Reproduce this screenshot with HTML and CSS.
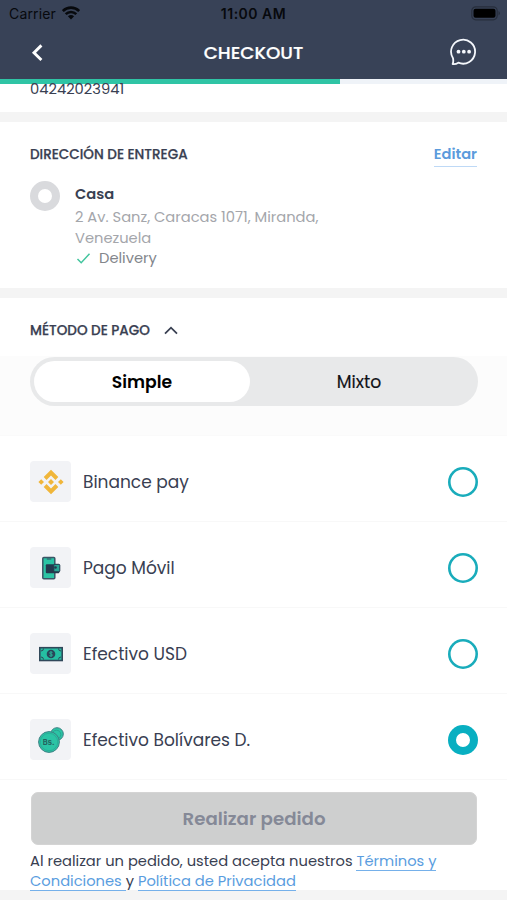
FILE: index.html
```html
<!DOCTYPE html>
<html lang="es">
<head>
<meta charset="utf-8">
<meta name="viewport" content="width=device-width, initial-scale=1">
<title>Checkout</title>
<link rel="stylesheet" href="styles.css">
</head>
<body>
<header class="topbar">
  <div class="status">
    <div class="carrier"><span>Carrier</span>
      <svg width="18" height="14" viewBox="0 0 18 14"><path d="M0.8 5.1C5.4.4 12.6.4 17.2 5.1" fill="none" stroke="#07090d" stroke-width="2.7"/><path d="M3.7 8.2C6.7 5.2 11.3 5.2 14.3 8.2" fill="none" stroke="#07090d" stroke-width="2.5"/><path d="M9 13.5 5.9 10.3Q9 7.7 12.1 10.3Z" fill="#07090d"/></svg>
    </div>
    <time class="clock">11:00 AM</time>
    <svg class="battery" width="30" height="15" viewBox="0 0 30 15"><rect x=".8" y=".8" width="25.4" height="13" rx="4" fill="none" stroke="#272e3c" stroke-width="1.2"/><rect x="2.5" y="2.8" width="22" height="9" rx="2" fill="#000"/><path d="M27.5 5v4.5q1.4-.6 1.4-2.2T27.5 5z" fill="#272e3c"/></svg>
  </div>
  <nav class="nav">
    <svg class="back" width="14" height="20" viewBox="0 0 14 20"><path d="M11.4 2.4 4 9.700 11.400 17" fill="none" stroke="#fff" stroke-width="2.900"/></svg>
    <h1 class="title">CHECKOUT</h1>
    <svg class="chat" width="28" height="28" viewBox="0 0 28 28"><path d="M3 20.200A12 12 0 1 1 8.300 24.700Q5.500 26.500 2.600 26Q3.700 23.500 3 20.200Z" fill="none" stroke="#f4f7fc" stroke-width="1.800" stroke-linejoin="round"/><g fill="#f4f7fc"><circle cx="8.500" cy="13.700" r="1.900"/><circle cx="13.800" cy="13.700" r="1.900"/><circle cx="19.100" cy="13.700" r="1.900"/></g></svg>
  </nav>
</header>
<div class="progress"><div class="progress-fill"></div></div>
<main>
  <section class="contact"><span class="phone">04242023941</span></section>
  <section class="address">
    <div class="section-head"><h2 class="heading">DIRECCIÓN DE ENTREGA</h2><a class="edit">Editar</a></div>
    <div class="place">
      <span class="place-radio"></span>
      <div class="place-info">
        <strong class="place-name">Casa</strong>
        <p class="place-text">2 Av. Sanz, Caracas 1071, Miranda,<br>Venezuela</p>
        <div class="delivery"><svg width="15" height="13" viewBox="0 0 15 13"><path d="M1.500 7 5.200 10.700 13.500 1.800" fill="none" stroke="#43c59e" stroke-width="1.500"/></svg><span>Delivery</span></div>
      </div>
    </div>
  </section>
  <section class="payment">
    <div class="payment-head"><h2 class="heading">MÉTODO DE PAGO</h2><svg width="14" height="9" viewBox="0 0 14 9"><path d="M1 7.700 7 1.700 13 7.700" fill="none" stroke="#394052" stroke-width="1.800"/></svg></div>
    <div class="switch-band"><div class="switch"><div class="tab active">Simple</div><div class="tab mixed">Mixto</div></div></div>
    <ul class="methods">
      <li class="method"><span class="icon"><svg width="26" height="26" viewBox="0 0 26 26"><g fill="#f0b63a"><path d="M13 .8 20.300 8.100 17.500 10.900 13 6.400 8.500 10.900 5.700 8.100ZM13 25.200 20.300 17.900 17.500 15.100 13 19.600 8.500 15.100 5.700 17.900ZM13 10 16 13 13 16 10 13ZM3.200 10.200 6 13 3.200 15.800.4 13ZM22.800 10.200 25.600 13 22.800 15.800 20 13Z"/></g></svg></span><span class="name">Binance pay</span><span class="radio"></span></li>
      <li class="method"><span class="icon"><svg width="26" height="26" viewBox="0 0 26 26"><rect x="4.800" y="2.500" width="12" height="21.300" rx="1" fill="#2bc4a5" stroke="#3b5566" stroke-width="1.500"/><path d="M8.800 3.500h4.500v1H8.800z" fill="#344b60"/><rect x="7.800" y="9.300" width="13.500" height="9" rx="1" fill="#24394e"/><rect x="15.800" y="9.300" width="6" height="7.500" rx="1" fill="#2aa594" stroke="#24394e"/><circle cx="17.500" cy="12.500" r="1.300" fill="#24394e"/></svg></span><span class="name">Pago Móvil</span><span class="radio"></span></li>
      <li class="method"><span class="icon"><svg width="26" height="26" viewBox="0 0 26 26"><rect x="1.800" y="6.700" width="22.400" height="12.800" fill="#25bea2" stroke="#30485a" stroke-width="1.600"/><path d="M3 10q2.500 0 2.500-2.500M23 10q-2.500 0-2.500-2.500M3 16q2.500 0 2.500 2.500M23 16q-2.500 0-2.500 2.500" fill="none" stroke="#30485a"/><circle cx="13" cy="13" r="4.300" fill="#29455a"/><path d="M14.500 11.400q-3-1.100-3 .5c0 1.500 3 .7 3 2.200 0 1.600-3 .7-3.300.4M13 10v6" fill="none" stroke="#2bc4a5" stroke-width=".7"/></svg></span><span class="name">Efectivo USD</span><span class="radio"></span></li>
      <li class="method"><span class="icon"><svg width="26" height="26" viewBox="0 0 26 26"><circle cx="19" cy="7" r="6.300" fill="#2bc4a5" stroke="#3c8184"/><circle cx="18.500" cy="7.500" r="4.300" fill="none" stroke="#279c8b" stroke-width=".8"/><circle cx="11" cy="15" r="10.400" fill="#2bc4a5" stroke="#3c8184"/><circle cx="11" cy="15" r="8.700" fill="none" stroke="#27a592" stroke-width=".7"/><text class="coin-text" x="4.800" y="17.500">Bs.</text></svg></span><span class="name">Efectivo Bolívares D.</span><span class="radio selected"></span></li>
    </ul>
  </section>
</main>
<footer class="footer">
  <button class="order">Realizar pedido</button>
  <p class="legal">Al realizar un pedido, usted acepta nuestros <a>Términos y</a><br><a>Condiciones </a>y <a>Política de Privacidad</a></p>
</footer>
</body>
</html>
```
FILE: styles.css
```css
* { box-sizing: border-box; }
body { margin: 0; height: 900px; overflow: hidden; background: #f4f4f4; font-family: Poppins, Inter, sans-serif; color: #394052; white-space: nowrap; }
h1, h2, p, ul { margin: 0; padding: 0; }
svg { display: block; flex: none; }
.topbar { height: 79px; background: #384257; }
.status { height: 28px; display: grid; grid-template-columns: 1fr auto 1fr; align-items: center; padding: 0 6px; color: #07090d; font: 14px/20px Inter, sans-serif; }
.carrier { display: flex; gap: 6px; align-items: center; letter-spacing: .15px; padding-left: 3px; height: 20px; }
.carrier svg { margin-top: -2px; }
.clock { font-weight: 600; letter-spacing: .5px; }
.battery { justify-self: end; margin-top: -2px; }
.nav { height: 49px; display: grid; grid-template-columns: 1fr auto 1fr; align-items: center; padding: 0 30px; }
.title { color: #fff; font-size: 18.3px; line-height: 24px; font-weight: 500; -webkit-text-stroke: .2px #fff; }
.chat { justify-self: end; margin-right: -1px; margin-top: -1px; }
.progress { height: 5px; background: #eff3f8; }
.progress-fill { width: 340px; height: 5px; background: #2fc4a5; }
.contact { height: 28px; background: #fff; padding-left: 30px; font-size: 14.7px; line-height: 10px; }
.phone { display: block; }
.address { height: 166px; margin-top: 10px; background: #fff; padding: 22px 30px 0; }
.section-head { height: 23px; display: flex; justify-content: space-between; align-items: flex-start; }
.heading { font-size: 13.55px; line-height: 22px; font-weight: 500; -webkit-text-stroke: .25px #394052; }
.edit { font-size: 14.6px; line-height: 20px; font-weight: 600; color: #5b9bdc; border-bottom: 1px solid #bed9f6; height: 23px; }
.place { display: flex; gap: 15px; margin-top: 14px; }
.place-radio { width: 30px; height: 30px; border: 8px solid #d9dadd; border-radius: 50%; }
.place-name { display: block; font-size: 14.7px; line-height: 26px; font-weight: 600; }
.place-text { font-size: 14.7px; line-height: 21px; color: #a4a6ab; }
.delivery { display: flex; align-items: center; gap: 8px; height: 20px; padding-left: 1px; margin-top: -1px; color: #83868c; font-size: 14.7px; }
.payment { margin-top: 10px; background: #fff; }
.payment-head { height: 58px; padding: 7px 30px 0; display: flex; align-items: center; gap: 14px; }
.payment-head svg { margin-top: -1px; }
.switch-band { height: 80px; background: #fcfcfc; border-bottom: 1px solid #fafafa; padding: 1px 29px 0 30px; }
.switch { display: grid; grid-template-columns: 216px 1fr; height: 49px; background: #e8e9ea; border-radius: 25px; padding: 4px; }
.tab { display: flex; align-items: center; justify-content: center; font-size: 17.2px; line-height: 24px; color: #111318; border-radius: 22px; }
.active { background: #fff; color: #000; font-weight: 600; }
.mixed { padding-right: 6px; -webkit-text-stroke: .15px #111318; }
.methods { list-style: none; }
.method { height: 86px; display: flex; align-items: center; padding: 6px 29px 0 30px; border-bottom: 1px solid #f8f8f8; }
.icon { width: 41px; height: 41px; border-radius: 4px; background: #f2f3f6; display: flex; align-items: center; justify-content: center; margin-right: 12px; }
.coin-text { font: 700 7.5px Inter, sans-serif; fill: #24635f; }
.name { font-size: 17px; line-height: 24px; }
.radio { width: 30px; height: 30px; margin-left: auto; box-shadow: inset 0 0 0 2.6px #19acbb; border-radius: 50%; }
.selected { box-shadow: inset 0 0 0 8px #08afc1; }
.footer { background: #fff; height: 110px; padding: 12px 30px 0 31px; }
.order { display: block; width: 100%; height: 53px; border: 1px solid #d4d4d4; border-radius: 7px; background: #cecfcf; color: #858997; font: 600 18.2px/26px Poppins, Inter, sans-serif; padding: 0; }
.legal { margin: 6px 0 0 -1px; font-size: 14.7px; line-height: 20px; }
.legal a { color: #5a9de0; display: inline-block; border-bottom: 1px solid #75b0ea; line-height: 17px; white-space: pre; }
```
